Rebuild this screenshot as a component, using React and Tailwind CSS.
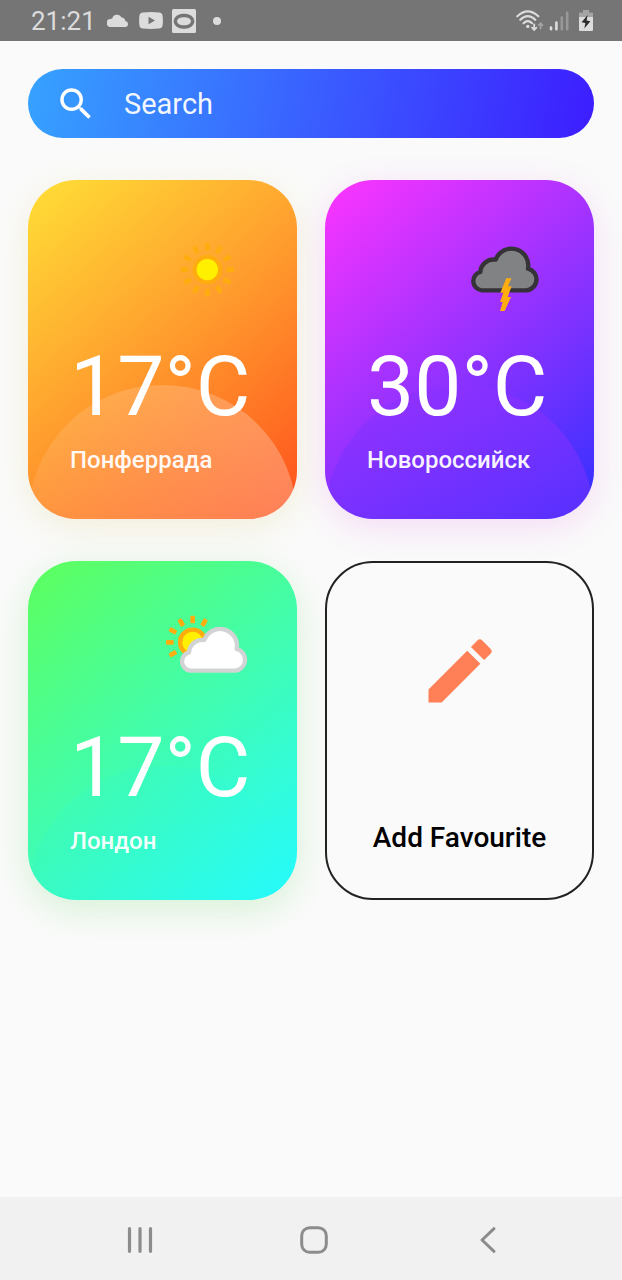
import React from "react";
import { MdEdit, MdSearch } from "react-icons/md";

const CLOUD =
  "M512 391 H646 A33 33 0 0 0 651 326 A50.5 50.5 0 0 0 554 299 A40 40 0 0 0 508 336 A28 28 0 0 0 512 391 Z";

function Rays({ cx, cy, angles }) {
  return angles.map((angle) => (
    <rect
      key={angle}
      x={cx - 7}
      y={cy - 80}
      width="14"
      height="23"
      rx="3"
      fill="#ffad0e"
      transform={`rotate(${angle} ${cx} ${cy})`}
    />
  ));
}

function SunIcon() {
  return (
    <svg viewBox="477 186 288 288" className="size-24 self-end" aria-hidden="true">
      <Rays cx={622} cy={329} angles={[0, 30, 60, 90, 120, 150, 180, 210, 240, 270, 300, 330]} />
      <circle cx="622" cy="329" r="38" fill="#fff000" stroke="#ffad0e" strokeWidth="12" />
    </svg>
  );
}

function StormIcon() {
  return (
    <svg viewBox="435 186 288 288" className="size-24 self-end" aria-hidden="true">
      <path d={CLOUD} fill="#818284" stroke="#363338" strokeWidth="13" strokeLinejoin="round" />
      <path
        d="M586 355 L601 355 L591 379 L602 379 L590 411 L600 411 L581 453 L567 453 L575 426 L567 426 L577 398 L568 398 Z"
        fill="#ffad0e"
      />
    </svg>
  );
}

function PartlyCloudyIcon() {
  return (
    <svg viewBox="477 189 288 288" className="size-24 self-end" aria-hidden="true">
      <Rays cx={578} cy={307} angles={[0, 30, 240, 270, 300, 330]} />
      <circle cx="578" cy="307" r="38" fill="#fff000" stroke="#ffad0e" strokeWidth="13" />
      <path
        d={CLOUD}
        transform="translate(59 1)"
        fill="#ffffff"
        stroke="#d2d3d4"
        strokeWidth="13"
        strokeLinejoin="round"
      />
    </svg>
  );
}

const places = [
  {
    city: "Понферрада",
    temp: "17°C",
    Icon: SunIcon,
    card: "bg-[linear-gradient(140deg,#ffdf36,#ff9e2e_48%,#ff501c)] shadow-[0_8px_34px_rgba(215,200,90,0.2)]",
    hill: "bg-[linear-gradient(90deg,rgba(255,255,255,0.09),rgba(255,255,255,0.27))]",
  },
  {
    city: "Новороссийск",
    temp: "30°C",
    Icon: StormIcon,
    card: "bg-[linear-gradient(140deg,#ff34ff,#3030ff)] shadow-[0_8px_34px_rgba(225,60,225,0.16)]",
    hill: "bg-[linear-gradient(90deg,rgba(98,48,255,0.3),rgba(190,48,255,0.26))]",
  },
  {
    city: "Лондон",
    temp: "17°C",
    Icon: PartlyCloudyIcon,
    card: "bg-[linear-gradient(140deg,#5eff5c,#24faff)] shadow-[0_10px_36px_rgba(90,215,90,0.22)]",
    hill: "bg-[linear-gradient(90deg,rgba(40,240,220,0.12),rgba(40,255,240,0.12))]",
  },
];

function PlaceCard({ place }) {
  const { city, temp, Icon, card, hill } = place;
  return (
    <article
      className={`relative isolate flex flex-col overflow-hidden rounded-[48px] px-[42px] pt-[42px] pb-[45px] text-white ${card}`}
    >
      <div className={`absolute inset-x-0 bottom-0 -z-10 aspect-[2/1] rounded-t-full ${hill}`} />
      <Icon />
      <p className="mt-5 text-[84px] leading-[98px] whitespace-nowrap">{temp}</p>
      <h2 className="mt-[10px] text-2xl leading-7 font-medium whitespace-nowrap text-white/95">{city}</h2>
    </article>
  );
}

function StatusBar() {
  return (
    <header className="flex h-[41px] items-center justify-between bg-[#757575] pr-[29px] pl-[31px] text-[#dcdcdc]">
      <div className="flex items-center">
        <time className="text-[26px] leading-8">21:21</time>
        <svg viewBox="0 0 22 13" className="ml-[11px] h-[13px] w-[22px]" fill="currentColor" aria-hidden="true">
          <path d="M4 13 A4 4 0 0 1 3.2 5 Q4.6 4.3 5.2 4.4 A5 5 0 0 1 14.6 3.6 Q17.8 4 18.3 7 A3.1 3.1 0 0 1 19 13 Z" />
        </svg>
        <svg viewBox="0 0 24 17" className="ml-[10px] h-[17px] w-6" aria-hidden="true">
          <path
            d="M4 .4 Q12 -.3 20 .4 Q23.4 .6 23.6 4 Q24.2 8.5 23.6 13 Q23.4 16.4 20 16.6 Q12 17.3 4 16.6 Q.6 16.4 .4 13 Q-.2 8.5 .4 4 Q.6 .6 4 .4 Z"
            fill="currentColor"
          />
          <path d="M9.500 4.800 V12.200 L16 8.500 Z" fill="#757575" />
        </svg>
        <svg viewBox="0 0 24 24" className="ml-[9px] size-6" aria-hidden="true">
          <rect width="24" height="24" rx="1.5" fill="currentColor" />
          <rect x="3.3" y="6.5" width="17.4" height="11.5" rx="8" ry="5.75" fill="none" stroke="#757575" strokeWidth="3.5" />
        </svg>
        <span className="ml-[17px] size-2 rounded-full bg-[#dcdcdc]" />
      </div>
      <div className="flex items-center">
        <svg viewBox="0 0 28 22" className="h-[22px] w-7" fill="none" stroke="currentColor" strokeWidth="2.2" strokeLinecap="round" aria-hidden="true">
          <path d="M1.3 6.2 Q11.8 -3.6 22.3 6.2" />
          <path d="M4.3 9.8 Q11.8 2.6 19.3 9.8" />
          <path d="M7.5 13.2 Q11.8 9 16.1 13.2" />
          <circle cx="11.8" cy="16.4" r="1.7" fill="currentColor" stroke="none" />
          <path d="M18.2 14.3 V19.6 M16 17.7 L18.2 20 L20.4 17.7" strokeWidth="1.8" />
          <path d="M24.6 18.5 V13.5 M22.7 15.2 L24.6 13.2 L26.5 15.2" strokeWidth="1.8" stroke="#a3a3a3" />
        </svg>
        <svg viewBox="0 0 20 20" className="ml-[5px] size-5" strokeWidth="2.6" strokeLinecap="round" aria-hidden="true">
          <path d="M2 16.5 V18.3 M7.4 11.5 V18.3" stroke="currentColor" />
          <path d="M12.8 6.5 V18.3 M18.2 1.7 V18.3" stroke="#989898" />
        </svg>
        <svg viewBox="0 0 14 21" className="ml-[10px] h-[21px] w-[14px]" aria-hidden="true">
          <path d="M4 0 H10 V2.5 H13 Q14 2.5 14 3.5 V8 H0 V3.5 Q0 2.5 1 2.5 H4 Z" fill="#a5a5a5" />
          <path d="M0 7 H14 V20 Q14 21 13 21 H1 Q0 21 0 20 Z" fill="currentColor" />
          <path d="M8.6 5 L2.6 12.3 L6.4 13 L5.3 18.6 L11.4 11.2 L7.6 10.6 Z" fill="#2b2b2b" />
        </svg>
      </div>
    </header>
  );
}

function NavBar() {
  const button = "flex items-center justify-center";
  return (
    <nav className="mt-auto grid h-[83px] grid-cols-3 bg-[#f1f1f1] pt-[3px] pr-[47px] pl-[53px] text-[#8c8c8c]">
      <button type="button" aria-label="Recent apps" className={button}>
        <svg viewBox="0 0 28 28" className="size-7" stroke="currentColor" strokeWidth="3.2" strokeLinecap="round">
          <path d="M3.5 2.7 V25.3 M14 2.7 V25.3 M24.5 2.7 V25.3" />
        </svg>
      </button>
      <button type="button" aria-label="Home" className={button}>
        <svg viewBox="0 0 28 28" className="size-7" fill="none" stroke="currentColor" strokeWidth="3">
          <rect x="1.7" y="1.7" width="24.6" height="24.6" rx="8" />
        </svg>
      </button>
      <button type="button" aria-label="Back" className={button}>
        <svg viewBox="0 0 28 28" className="size-7" fill="none" stroke="currentColor" strokeWidth="3" strokeLinecap="round" strokeLinejoin="round">
          <path d="M20 2.7 L8 14 L20 25.3" />
        </svg>
      </button>
    </nav>
  );
}

export default function App() {
  return (
    <div className="flex min-h-screen flex-col bg-[#fafafa] font-[Roboto,sans-serif]">
      <StatusBar />
      <main className="flex flex-col gap-[42px] p-7">
        <label className="flex h-[69px] items-center gap-[27px] rounded-full bg-[linear-gradient(100deg,#36a2ff,#3d1dff)] pr-7 pl-[27px] text-white">
          <MdSearch className="size-[42px] shrink-0" aria-hidden="true" />
          <input
            type="search"
            aria-label="Search"
            placeholder="Search"
            className="h-full min-w-0 flex-1 bg-transparent text-[29px] text-white outline-none placeholder:text-white/95"
          />
        </label>
        <section className="grid grid-cols-2 gap-x-7 gap-y-[42px]">
          {places.map((place) => (
            <PlaceCard key={place.city} place={place} />
          ))}
          <button
            type="button"
            className="flex flex-col items-center justify-between rounded-[48px] border-2 border-[#222222] bg-[#fafafa] pt-[66px] pb-[44px] text-black"
          >
            <MdEdit className="size-[84px] text-[#ff7f57]" aria-hidden="true" />
            <span className="text-[28px] leading-8 font-medium">Add Favourite</span>
          </button>
        </section>
      </main>
      <NavBar />
    </div>
  );
}
